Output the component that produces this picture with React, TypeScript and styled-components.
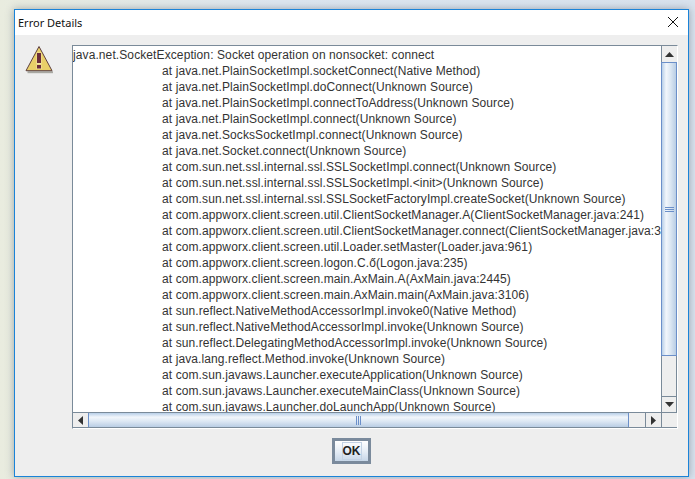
import React from "react";
import styled, { createGlobalStyle } from "styled-components";

const GlobalStyle = createGlobalStyle`
  html, body {
    margin: 0;
    padding: 0;
    background: #dfe6ee;
  }
`;

const Page = styled.div`
  box-sizing: border-box;
  width: 695px;
  height: 479px;
  overflow: hidden;
  padding: 9px 6px 2px 14px;
  background: linear-gradient(90deg, #e9ecdf 0%, #dde6f0 40%, #d9e3ee 100%);
  font-family: "Liberation Sans", Arial, sans-serif;
`;

const Window = styled.div`
  box-sizing: border-box;
  height: 100%;
  display: flex;
  flex-direction: column;
  border: 1px solid #1a83d8;
  background: #eeeeee;
  box-shadow: 0 0 8px rgba(70, 80, 95, 0.45);
`;

const TitleBar = styled.div`
  box-sizing: border-box;
  height: 25px;
  flex: none;
  display: flex;
  align-items: center;
  justify-content: space-between;
  padding: 0 10px 1px 3px;
  background: #ffffff;
  font-family: "Noto Sans", "Open Sans", sans-serif;
  font-size: 11px;
  color: #111111;
`;

const Body = styled.div`
  flex: none;
  display: flex;
  align-items: flex-start;
  padding: 10px 10px 0 9px;
`;

const IconSlot = styled.div`
  width: 48px;
  height: 30px;
  flex: none;
  padding-top: 1px;
`;

const ScrollPane = styled.div`
  box-sizing: border-box;
  width: 606px;
  height: 384px;
  display: grid;
  grid-template-columns: 588px 16px;
  grid-template-rows: 366px 16px;
  border: 1px solid #7a8a99;
  border-right-color: #ffffff;
  border-bottom-color: #ffffff;
  background: #ffffff;
`;

const Viewport = styled.div`
  overflow: hidden;
  background: #ffffff;
  padding-top: 1px;
  font-size: 12px;
  letter-spacing: 0.1px;
  line-height: 16px;
  color: #333333;
  white-space: pre;
`;

const TraceLine = styled.div<{ $indented?: boolean }>`
  height: 16px;
  padding-left: ${(p) => (p.$indented ? "89px" : "0")};
`;

const VerticalBar = styled.div`
  display: flex;
  flex-direction: column;
  background: #eeeeee;
`;

const HorizontalBar = styled.div`
  display: flex;
  background: #eeeeee;
  border-top: 1px solid #7a8a99;
  border-bottom: 1px solid #7a8a99;
`;

const Corner = styled.div`
  background: #eeeeee;
  border-top: 1px solid #7a8a99;
  border-left: 1px solid #7a8a99;
  border-bottom: 1px solid #7a8a99;
`;

const VerticalButton = styled.div<{ $separated?: boolean }>`
  flex: none;
  height: 16px;
  box-sizing: border-box;
  display: flex;
  align-items: center;
  justify-content: center;
  background: #eeeeee;
  border-left: 1px solid #7a8a99;
  border-right: 1px solid ${(p) => (p.$separated ? "#7a8a99" : "#eeeeee")};
  border-top: ${(p) => (p.$separated ? "1px solid #7a8a99" : "none")};
`;

const HorizontalButton = styled.div<{ $separated?: boolean }>`
  flex: none;
  width: ${(p) => (p.$separated ? "16px" : "15px")};
  box-sizing: border-box;
  display: flex;
  align-items: center;
  justify-content: center;
  background: #eeeeee;
  border-left: ${(p) => (p.$separated ? "1px solid #7a8a99" : "none")};
`;

const VerticalThumb = styled.div`
  flex: none;
  height: 294px;
  display: flex;
  align-items: center;
  justify-content: center;
  box-sizing: border-box;
  border: 1px solid #6b8fc9;
  background: linear-gradient(90deg, #b8cfe8 0%, #f2f6fb 30%, #dce7f3 60%, #b9cde4 100%);
`;

const HorizontalThumb = styled.div`
  flex: none;
  width: 541px;
  display: flex;
  align-items: center;
  justify-content: center;
  box-sizing: border-box;
  border-left: 1px solid #6b8fc9;
  border-right: 1px solid #6b8fc9;
  background: linear-gradient(180deg, #b8cfe8 0%, #f2f6fb 30%, #dce7f3 60%, #b9cde4 100%);
`;

const VerticalTrack = styled.div`
  flex: 1;
  background: #eeeeee;
  border-left: 1px solid #7a8a99;
  border-right: 1px solid #7a8a99;
`;

const HorizontalTrack = styled.div`
  flex: 1;
  background: #eeeeee;
`;

const Footer = styled.div`
  flex: none;
  display: flex;
  justify-content: center;
  padding-top: 9px;
`;

const OkButton = styled.button`
  box-sizing: border-box;
  width: 39px;
  height: 26px;
  padding: 0;
  display: flex;
  align-items: center;
  justify-content: center;
  border: 3px solid #7a8a9c;
  background: linear-gradient(180deg, #ffffff 0%, #e4ecf5 55%, #c6d6e8 100%);
  font-family: "Liberation Sans", Arial, sans-serif;
  font-size: 12px;
  font-weight: 700;
  color: #222222;
`;

const OkLabel = styled.span`
  box-sizing: border-box;
  width: 20px;
  height: 18px;
  display: flex;
  align-items: center;
  justify-content: center;
  border: 1px solid #c3d2e4;
`;

const lines = [
  "java.net.SocketException: Socket operation on nonsocket: connect",
  "at java.net.PlainSocketImpl.socketConnect(Native Method)",
  "at java.net.PlainSocketImpl.doConnect(Unknown Source)",
  "at java.net.PlainSocketImpl.connectToAddress(Unknown Source)",
  "at java.net.PlainSocketImpl.connect(Unknown Source)",
  "at java.net.SocksSocketImpl.connect(Unknown Source)",
  "at java.net.Socket.connect(Unknown Source)",
  "at com.sun.net.ssl.internal.ssl.SSLSocketImpl.connect(Unknown Source)",
  "at com.sun.net.ssl.internal.ssl.SSLSocketImpl.<init>(Unknown Source)",
  "at com.sun.net.ssl.internal.ssl.SSLSocketFactoryImpl.createSocket(Unknown Source)",
  "at com.appworx.client.screen.util.ClientSocketManager.A(ClientSocketManager.java:241)",
  "at com.appworx.client.screen.util.ClientSocketManager.connect(ClientSocketManager.java:3",
  "at com.appworx.client.screen.util.Loader.setMaster(Loader.java:961)",
  "at com.appworx.client.screen.logon.C.ő(Logon.java:235)",
  "at com.appworx.client.screen.main.AxMain.A(AxMain.java:2445)",
  "at com.appworx.client.screen.main.AxMain.main(AxMain.java:3106)",
  "at sun.reflect.NativeMethodAccessorImpl.invoke0(Native Method)",
  "at sun.reflect.NativeMethodAccessorImpl.invoke(Unknown Source)",
  "at sun.reflect.DelegatingMethodAccessorImpl.invoke(Unknown Source)",
  "at java.lang.reflect.Method.invoke(Unknown Source)",
  "at com.sun.javaws.Launcher.executeApplication(Unknown Source)",
  "at com.sun.javaws.Launcher.executeMainClass(Unknown Source)",
  "at com.sun.javaws.Launcher.doLaunchApp(Unknown Source)",
];

function WarningIcon() {
  return (
    <svg width="31" height="29" viewBox="0 0 31 29">
      <path d="M3.5 26.2 H29" stroke="#a8a8a2" strokeWidth="2" />
      <path d="M15 0.5 L28 24.7 H2 Z" fill="#e9d069" stroke="#5e3f3f" strokeWidth="1" strokeLinejoin="round" />
      <rect x="12.5" y="6.5" width="5" height="11.5" fill="#f3e6a8" />
      <rect x="13" y="7" width="4" height="10" fill="#6b2d3a" />
      <rect x="12.5" y="18.5" width="5" height="4.5" fill="#f3e6a8" />
      <rect x="13" y="19" width="4" height="3.5" fill="#6b2d3a" />
    </svg>
  );
}

function CloseIcon() {
  return (
    <svg width="10" height="10" viewBox="0 0 10 10">
      <path d="M0 0 L10 10 M10 0 L0 10" stroke="#111111" strokeWidth="1" />
    </svg>
  );
}

function Arrow({ dir }: { dir: "up" | "down" | "left" | "right" }) {
  const points = {
    up: "0,5 4.5,0 9,5",
    down: "0,0 9,0 4.5,5",
    left: "5,0 5,9 0,4.5",
    right: "0,0 5,4.5 0,9",
  }[dir];
  const vertical = dir === "up" || dir === "down";
  return (
    <svg width={vertical ? 9 : 5} height={vertical ? 5 : 9}>
      <polygon points={points} fill="#333333" />
    </svg>
  );
}

function GripV() {
  return (
    <svg width="9" height="5">
      <path d="M0 0.5 H9 M0 2.5 H9 M0 4.5 H9" stroke="#6b8fc9" />
    </svg>
  );
}

function GripH() {
  return (
    <svg width="5" height="9">
      <path d="M0.5 0 V9 M2.5 0 V9 M4.5 0 V9" stroke="#6b8fc9" />
    </svg>
  );
}

export default function App() {
  return (
    <Page>
      <GlobalStyle />
      <Window>
        <TitleBar>
          <span>Error Details</span>
          <CloseIcon />
        </TitleBar>
        <Body>
          <IconSlot>
            <WarningIcon />
          </IconSlot>
          <ScrollPane>
            <Viewport>
              {lines.map((line, i) => (
                <TraceLine key={i} $indented={i > 0}>
                  {line}
                </TraceLine>
              ))}
            </Viewport>
            <VerticalBar>
              <VerticalButton>
                <Arrow dir="up" />
              </VerticalButton>
              <VerticalThumb>
                <GripV />
              </VerticalThumb>
              <VerticalTrack />
              <VerticalButton $separated>
                <Arrow dir="down" />
              </VerticalButton>
            </VerticalBar>
            <HorizontalBar>
              <HorizontalButton>
                <Arrow dir="left" />
              </HorizontalButton>
              <HorizontalThumb>
                <GripH />
              </HorizontalThumb>
              <HorizontalTrack />
              <HorizontalButton $separated>
                <Arrow dir="right" />
              </HorizontalButton>
            </HorizontalBar>
            <Corner />
          </ScrollPane>
        </Body>
        <Footer>
          <OkButton>
            <OkLabel>OK</OkLabel>
          </OkButton>
        </Footer>
      </Window>
    </Page>
  );
}
